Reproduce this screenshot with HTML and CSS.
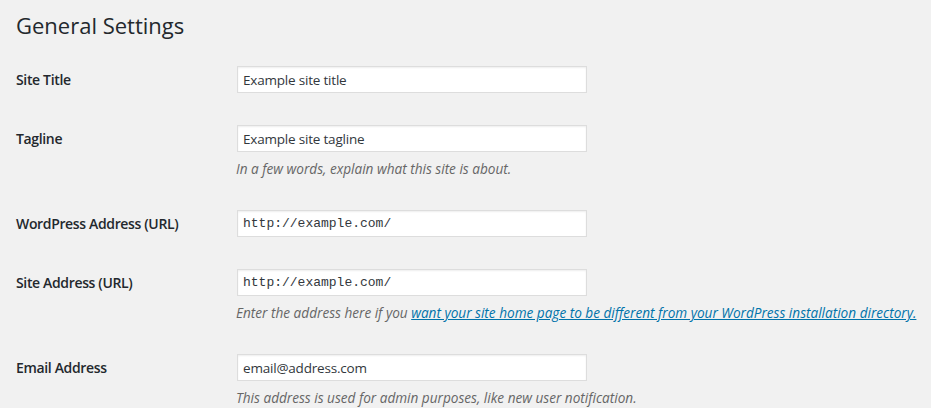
FILE: index.html
```html
<!DOCTYPE html>
<html lang="en">
<head>
    <meta charset="UTF-8">
    <meta name="viewport" content="width=device-width, initial-scale=1.0">
    <title>General Settings</title>
    <link rel="stylesheet" href="styles.css">
</head>
<body>
    <div class="wrap">
        <h1>General Settings</h1>

        <table class="form-table">
            <tbody>
                <tr>
                    <th><label for="blogname">Site Title</label></th>
                    <td><input type="text" id="blogname" class="regular-text" value="Example site title"></td>
                </tr>
                <tr>
                    <th><label for="blogdescription">Tagline</label></th>
                    <td>
                        <input type="text" id="blogdescription" class="regular-text" value="Example site tagline">
                        <p class="description">In a few words, explain what this site is about.</p>
                    </td>
                </tr>
                <tr>
                    <th><label for="siteurl">WordPress Address (URL)</label></th>
                    <td><input type="url" id="siteurl" class="regular-text code" value="http://example.com/"></td>
                </tr>
                <tr>
                    <th><label for="home">Site Address (URL)</label></th>
                    <td>
                        <input type="url" id="home" class="regular-text code" value="http://example.com/">
                        <p class="description">Enter the address here if you <a href="#">want your site home page to be different from your WordPress installation directory.</a></p>
                    </td>
                </tr>
                <tr>
                    <th><label for="admin_email">Email Address</label></th>
                    <td>
                        <input type="email" id="admin_email" class="regular-text" value="email@address.com">
                        <p class="description">This address is used for admin purposes, like new user notification.</p>
                    </td>
                </tr>
            </tbody>
        </table>
    </div>
</body>
</html>
```

FILE: styles.css
```css
html, body {
    margin: 0;
    background-color: #f1f1f1;
}
body {
    font-family: "Open Sans", "Noto Sans", sans-serif;
    font-size: 13px;
    line-height: 1.4;
    color: #23282d;
}
.wrap {
    padding: 10px 16px 0 16px;
}
h1 {
    margin: 0;
    font-size: 22px;
    font-weight: 400;
    line-height: 31px;
    color: #23282d;
}
.form-table {
    margin-top: 9px;
    border-collapse: collapse;
    table-layout: fixed;
    width: 100%;
}
.form-table th {
    width: 200px;
    padding: 21px 10px 19px 0;
    text-align: left;
    vertical-align: top;
    font-size: 14px;
    font-weight: 600;
    line-height: 1.3;
    letter-spacing: -0.35px;
}
.form-table td {
    padding: 15px 10px;
    vertical-align: top;
    font-size: 14px;
    line-height: 1.3;
}
.regular-text {
    display: block;
    box-sizing: border-box;
    width: 350px;
    height: 27px;
    margin: 1px 0 1px 1px;
    padding: 3px 5px;
    border: 1px solid #ddd;
    box-shadow: inset 0 1px 2px rgba(0, 0, 0, 0.07);
    background-color: #fff;
    color: #32373c;
    font-family: inherit;
    font-size: 13.5px;
    letter-spacing: -0.2px;
    outline: none;
}
.regular-text.code {
    font-family: "Liberation Mono", "DejaVu Sans Mono", monospace;
    font-size: 13px;
    letter-spacing: 0;
}
.description {
    margin: 6px 0 0 0;
    font-size: 13.6px;
    font-style: italic;
    line-height: 21px;
    color: #666;
    white-space: nowrap;
}
.description a {
    color: #0073aa;
}
```
